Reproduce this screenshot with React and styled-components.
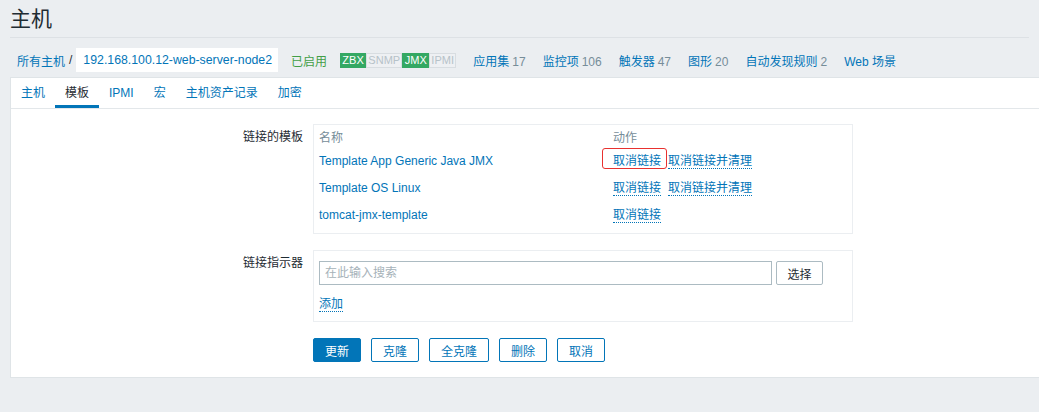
import React from 'react';
import styled, { createGlobalStyle } from 'styled-components';

const BLUE = '#0275b8';

const GlobalStyle = createGlobalStyle`
  html, body { margin: 0; padding: 0; background: #ebeef1; }
  body {
    font-family: "Liberation Sans", Arial, "Noto Sans CJK SC", sans-serif;
    font-size: 12px;
    color: #1f2c33;
  }
  * { box-sizing: border-box; }
`;

const Title = styled.h1`
  margin: 0 10px;
  padding: 7px 0 6px;
  font-size: 21px;
  line-height: 24px;
  font-weight: normal;
  color: #1f2c33;
  border-bottom: 1px solid #dde1e5;
`;

const Nav = styled.div`
  display: flex;
  align-items: center;
  height: 24px;
  margin: 10px 10px 5px;
  padding-left: 7px;
  white-space: nowrap;
`;

const Crumb = styled.span`
  color: ${BLUE};
`;

const Sep = styled.span`
  margin: 0 4px 0 4px;
  color: #1f2c33;
`;

const HostBox = styled.span`
  background: #fff;
  color: ${BLUE};
  padding: 0 6px 0 7px;
  line-height: 24px;
  font-size: 12.3px;
`;

const Status = styled.span`
  margin-left: 13px;
  color: #429e47;
`;

const Badges = styled.span`
  display: flex;
  margin-left: 13px;
`;

const Badge = styled.span`
  font-size: 11px;
  line-height: 13px;
  padding: 0 1.3px;
  border: 1px solid ${p => (p.$on ? '#34a863' : '#d8dde1')};
  background: ${p => (p.$on ? '#34a863' : '#eef0f3')};
  color: ${p => (p.$on ? '#ffffff' : '#b6c2c9')};
`;

const NavLink = styled.span`
  margin-left: 17px;
  color: ${BLUE};
`;

const Count = styled.span`
  color: #768d99;
  margin-left: 3px;
`;

const Panel = styled.div`
  margin-left: 10px;
  background: #fff;
  border: 1px solid #dfe4e7;
  border-right: none;
`;

const TabBar = styled.div`
  display: flex;
  border-bottom: 1px solid #e3e7ea;
`;

const Tab = styled.span`
  padding: 8px 10px 5px;
  line-height: 14px;
  color: ${p => (p.$active ? '#1f2c33' : BLUE)};
  border-bottom: 3px solid ${p => (p.$active ? BLUE : 'transparent')};
`;

const FormBody = styled.div`
  padding: 15px 0 15px;
  display: flex;
  flex-direction: column;
  gap: 16px;
`;

const FormRow = styled.div`
  display: grid;
  grid-template-columns: 292px 540px;
  column-gap: 10px;
`;

const Label = styled.div`
  text-align: right;
  padding-top: ${p => p.$top}px;
  line-height: 14px;
`;

const Box = styled.div`
  border: 1px solid #ebeef1;
  padding: ${p => p.$pad};
`;

const Table = styled.table`
  border-collapse: collapse;
  width: 100%;
`;

const Th = styled.th`
  text-align: left;
  font-weight: normal;
  color: #768d99;
  padding: 0;
  height: 18px;
  line-height: 14px;
  width: ${p => p.$w || 'auto'};
`;

const Td = styled.td`
  padding: 0;
  height: 27px;
  line-height: 14px;
  vertical-align: middle;
`;

const Link = styled.span`
  color: ${BLUE};
`;

const ActionLink = styled.span`
  position: relative;
  color: ${BLUE};
  border-bottom: 1px dotted ${BLUE};
  & + & { margin-left: 7px; }
`;

const Highlight = styled.span`
  position: absolute;
  left: -11px;
  right: -6px;
  top: -6px;
  bottom: -1px;
  border: 1.5px solid #e8312f;
  border-radius: 3px;
  pointer-events: none;
`;

const SearchRow = styled.div`
  display: flex;
  gap: 4px;
`;

const SearchInput = styled.input`
  width: 453px;
  height: 24px;
  border: 1px solid #acbbc2;
  padding: 0 5px;
  font: inherit;
  color: #1f2c33;
  &::placeholder { color: #a6b2b9; }
`;

const GreyButton = styled.button`
  height: 24px;
  width: 47px;
  border: 1px solid #acbbc2;
  border-radius: 2px;
  background: #fff;
  font: inherit;
  color: #1f2c33;
  padding: 0;
`;

const AddLine = styled.div`
  margin-top: 12px;
  line-height: 14px;
`;

const Buttons = styled.div`
  display: flex;
  gap: 10px;
  margin-left: 302px;
`;

const Button = styled.button`
  height: 24px;
  width: ${p => p.$w || 48}px;
  padding: 0;
  border: 1px solid ${BLUE};
  border-radius: 2px;
  background: ${p => (p.$primary ? BLUE : '#fff')};
  color: ${p => (p.$primary ? '#fff' : BLUE)};
  font: inherit;
`;

const templates = [
  { name: 'Template App Generic Java JMX', clear: true, mark: true },
  { name: 'Template OS Linux', clear: true },
  { name: 'tomcat-jmx-template', clear: false },
];

const navLinks = [
  ['应用集', '17'],
  ['监控项', '106'],
  ['触发器', '47'],
  ['图形', '20'],
  ['自动发现规则', '2'],
  ['Web 场景', null],
];

export default function App() {
  return (
    <>
      <GlobalStyle />
      <Title>主机</Title>
      <Nav>
        <Crumb>所有主机</Crumb>
        <Sep>/</Sep>
        <HostBox>192.168.100.12-web-server-node2</HostBox>
        <Status>已启用</Status>
        <Badges>
          <Badge $on>ZBX</Badge>
          <Badge>SNMP</Badge>
          <Badge $on>JMX</Badge>
          <Badge>IPMI</Badge>
        </Badges>
        {navLinks.map(([t, c]) => (
          <NavLink key={t}>
            {t}
            {c && <Count>{c}</Count>}
          </NavLink>
        ))}
      </Nav>
      <Panel>
        <TabBar>
          <Tab>主机</Tab>
          <Tab $active>模板</Tab>
          <Tab>IPMI</Tab>
          <Tab>宏</Tab>
          <Tab>主机资产记录</Tab>
          <Tab>加密</Tab>
        </TabBar>
        <FormBody>
          <FormRow>
            <Label $top={6}>链接的模板</Label>
            <Box $pad="4px 5px 5px 5px">
              <Table>
                <thead>
                  <tr>
                    <Th $w="294px">名称</Th>
                    <Th>动作</Th>
                  </tr>
                </thead>
                <tbody>
                  {templates.map(t => (
                    <tr key={t.name}>
                      <Td><Link>{t.name}</Link></Td>
                      <Td>
                        <ActionLink>
                          取消链接
                          {t.mark && <Highlight />}
                        </ActionLink>
                        {t.clear && <ActionLink>取消链接并清理</ActionLink>}
                      </Td>
                    </tr>
                  ))}
                </tbody>
              </Table>
            </Box>
          </FormRow>
          <FormRow>
            <Label $top={6}>链接指示器</Label>
            <Box $pad="10px 5px 10px 5px">
              <SearchRow>
                <SearchInput placeholder="在此输入搜索" />
                <GreyButton>选择</GreyButton>
              </SearchRow>
              <AddLine>
                <ActionLink>添加</ActionLink>
              </AddLine>
            </Box>
          </FormRow>
          <Buttons>
            <Button $primary>更新</Button>
            <Button>克隆</Button>
            <Button $w={60}>全克隆</Button>
            <Button>删除</Button>
            <Button>取消</Button>
          </Buttons>
        </FormBody>
      </Panel>
    </>
  );
}
